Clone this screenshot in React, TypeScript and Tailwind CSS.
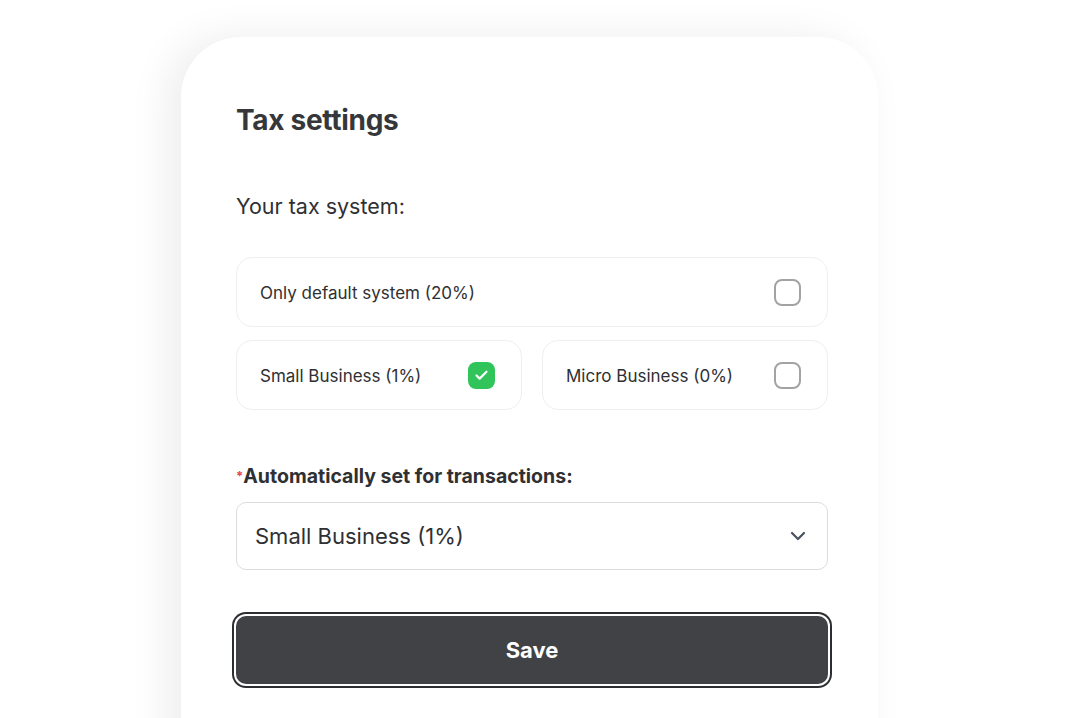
import { Check, ChevronDown } from 'lucide-react';

interface TaxOption {
  label: string;
  checked: boolean;
}

function CheckBox({ checked }: { checked: boolean }) {
  if (checked) {
    return (
      <div className="w-[27px] h-[27px] rounded-[8px] bg-[#30c45a] flex items-center justify-center">
        <Check className="w-[15px] h-[15px] text-white" strokeWidth={3.5} />
      </div>
    );
  }
  return <div className="w-[27px] h-[27px] rounded-[8px] border-[2.5px] border-[#a3a3a3] bg-white" />;
}

function OptionCard({ option }: { option: TaxOption }) {
  return (
    <div className="h-[70px] rounded-[16px] border border-[#efefef] bg-white flex items-center justify-between pl-[23px] pr-[26px]">
      <span className="text-[17px] leading-[24px] pt-[2px] text-[#2f3033]">{option.label}</span>
      <CheckBox checked={option.checked} />
    </div>
  );
}

export default function App() {
  const options: TaxOption[] = [
    { label: 'Only default system (20%)', checked: false },
    { label: 'Small Business (1%)', checked: true },
    { label: 'Micro Business (0%)', checked: false },
  ];

  return (
    <div className="w-[1088px] h-[718px] bg-white overflow-hidden pt-[37px] pl-[181px] font-['Inter',sans-serif]">
      <div className="w-[697px] h-[760px] bg-white rounded-t-[60px] shadow-[-14px_0_40px_rgba(0,0,0,0.07)] pt-[66px] pl-[55px] pr-[50px]">
        {/* Header */}
        <h1 className="text-[28px] leading-[34px] font-bold text-[#36373b] tracking-[-0.3px]">Tax settings</h1>

        <p className="mt-[55px] text-[21.5px] leading-[28px] text-[#2f3033]">Your tax system:</p>

        {/* Options */}
        <div className="mt-[37px] flex flex-col gap-[13px]">
          <OptionCard option={options[0]} />
          <div className="grid grid-cols-2 gap-[20px]">
            <OptionCard option={options[1]} />
            <OptionCard option={options[2]} />
          </div>
        </div>

        {/* Auto select */}
        <p className="mt-[54px] text-[19.5px] leading-[24px] font-bold text-[#2f3033]">
          <span className="text-[#e5484d] text-[13px] align-top">*</span>Automatically set for transactions:
        </p>
        <div className="mt-[14px] h-[68px] rounded-[10px] border border-[#dcdcdc] flex items-center justify-between pl-[18px] pr-[17px]">
          <span className="text-[22px] text-[#2f3033]">Small Business (1%)</span>
          <ChevronDown className="w-[24px] h-[24px] text-[#4a5060]" strokeWidth={2.2} />
        </div>

        {/* Save */}
        <button className="mt-[46px] w-full h-[68px] rounded-[10px] bg-[#404246] ring-[2px] ring-[#2d2e31] ring-offset-[2px] ring-offset-white text-white text-[22px] font-bold">
          Save
        </button>
      </div>
    </div>
  );
}
